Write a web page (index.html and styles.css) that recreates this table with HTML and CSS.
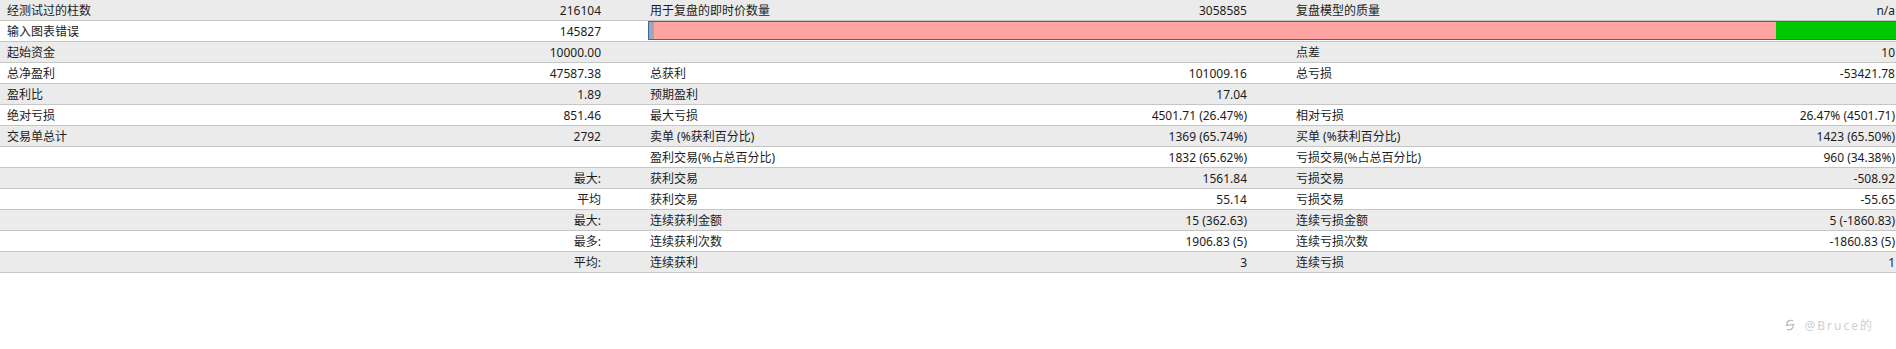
FILE: index.html
```html
<!DOCTYPE html>
<html lang="zh-CN">
<head>
<meta charset="utf-8">
<title>测试报告</title>
<link rel="stylesheet" href="styles.css">
</head>
<body>
<div class="report">
  <div class="row gray">
    <div class="grp"><span class="l">经测试过的柱数</span><span class="v">216104</span></div>
    <div class="grp"><span class="l">用于复盘的即时价数量</span><span class="v">3058585</span></div>
    <div class="grp last"><span class="l">复盘模型的质量</span><span class="v">n/a</span></div>
  </div>
  <div class="row">
    <div class="grp"><span class="l">输入图表错误</span><span class="v">145827</span></div>
    <div class="bar">
      <div class="bar-start"></div>
      <div class="bar-pink"></div>
      <div class="bar-green"></div>
    </div>
  </div>
  <div class="row gray">
    <div class="grp"><span class="l">起始资金</span><span class="v">10000.00</span></div>
    <div class="grp"><span class="l"></span><span class="v"></span></div>
    <div class="grp last"><span class="l">点差</span><span class="v">10</span></div>
  </div>
  <div class="row">
    <div class="grp"><span class="l">总净盈利</span><span class="v">47587.38</span></div>
    <div class="grp"><span class="l">总获利</span><span class="v">101009.16</span></div>
    <div class="grp last"><span class="l">总亏损</span><span class="v">-53421.78</span></div>
  </div>
  <div class="row gray">
    <div class="grp"><span class="l">盈利比</span><span class="v">1.89</span></div>
    <div class="grp"><span class="l">预期盈利</span><span class="v">17.04</span></div>
    <div class="grp last"><span class="l"></span><span class="v"></span></div>
  </div>
  <div class="row">
    <div class="grp"><span class="l">绝对亏损</span><span class="v">851.46</span></div>
    <div class="grp"><span class="l">最大亏损</span><span class="v">4501.71 (26.47%)</span></div>
    <div class="grp last"><span class="l">相对亏损</span><span class="v">26.47% (4501.71)</span></div>
  </div>
  <div class="row gray">
    <div class="grp"><span class="l">交易单总计</span><span class="v">2792</span></div>
    <div class="grp"><span class="l">卖单 (%获利百分比)</span><span class="v">1369 (65.74%)</span></div>
    <div class="grp last"><span class="l">买单 (%获利百分比)</span><span class="v">1423 (65.50%)</span></div>
  </div>
  <div class="row">
    <div class="grp"><span class="l"></span><span class="v"></span></div>
    <div class="grp"><span class="l">盈利交易(%占总百分比)</span><span class="v">1832 (65.62%)</span></div>
    <div class="grp last"><span class="l">亏损交易(%占总百分比)</span><span class="v">960 (34.38%)</span></div>
  </div>
  <div class="row gray">
    <div class="grp"><span class="l"></span><span class="v">最大:</span></div>
    <div class="grp"><span class="l">获利交易</span><span class="v">1561.84</span></div>
    <div class="grp last"><span class="l">亏损交易</span><span class="v">-508.92</span></div>
  </div>
  <div class="row">
    <div class="grp"><span class="l"></span><span class="v">平均</span></div>
    <div class="grp"><span class="l">获利交易</span><span class="v">55.14</span></div>
    <div class="grp last"><span class="l">亏损交易</span><span class="v">-55.65</span></div>
  </div>
  <div class="row gray">
    <div class="grp"><span class="l"></span><span class="v">最大:</span></div>
    <div class="grp"><span class="l">连续获利金额</span><span class="v">15 (362.63)</span></div>
    <div class="grp last"><span class="l">连续亏损金额</span><span class="v">5 (-1860.83)</span></div>
  </div>
  <div class="row">
    <div class="grp"><span class="l"></span><span class="v">最多:</span></div>
    <div class="grp"><span class="l">连续获利次数</span><span class="v">1906.83 (5)</span></div>
    <div class="grp last"><span class="l">连续亏损次数</span><span class="v">-1860.83 (5)</span></div>
  </div>
  <div class="row gray">
    <div class="grp"><span class="l"></span><span class="v">平均:</span></div>
    <div class="grp"><span class="l">连续获利</span><span class="v">3</span></div>
    <div class="grp last"><span class="l">连续亏损</span><span class="v">1</span></div>
  </div>
</div>
<div class="watermark">
  <svg class="wm-icon" width="14" height="14" viewBox="0 0 14 14" aria-hidden="true">
    <path d="M9.5 2.5 C6 1.5 3 4 4 7 M4.5 11.5 C8 12.5 11 10 10 7 M3 7.5 L11 6.5" fill="none" stroke="#b0b0b0" stroke-width="1.2" stroke-linecap="round"/>
  </svg>
  <span class="wm-text">@Bruce的</span>
</div>
</body>
</html>
```
FILE: styles.css
```css
html, body {
  margin: 0;
  padding: 0;
  background: #ffffff;
}

body {
  width: 1896px;
  height: 349px;
  position: relative;
  overflow: hidden;
  font-family: "Noto Sans", "Noto Sans CJK SC", sans-serif;
  font-size: 12px;
  color: #1c1c1c;
}

.report {
  display: flex;
  flex-direction: column;
}

.row {
  display: grid;
  grid-template-columns: 605px 608px 607px;
  column-gap: 38px;
  height: 20px;
  border-bottom: 1px solid #c6c6c6;
  background: #ffffff;
}

.row.gray {
  background: #ebebeb;
}

.grp {
  display: flex;
  justify-content: space-between;
  align-items: center;
  line-height: 20px;
  padding: 1px 4px 0 7px;
  height: 20px;
  box-sizing: border-box;
  white-space: nowrap;
}

.grp.last {
  padding-right: 1px;
}

.bar {
  grid-column: 2 / 4;
  margin-left: 5px;
  height: 19px;
  box-sizing: border-box;
  border-top: 1px solid #4a5ea8;
  border-bottom: 1px solid #4a5ea8;
  border-left: 1px solid #4a5ea8;
  display: flex;
}

.bar-start {
  width: 5px;
  background: #9aa9b6;
}

.bar-pink {
  flex: 1;
  background: #ffa3a3;
}

.bar-green {
  width: 120px;
  background: #00c800;
}

.watermark {
  position: absolute;
  right: 22px;
  top: 316px;
  display: flex;
  align-items: center;
  gap: 8px;
  color: #cfcfcf;
  font-size: 12px;
}

.wm-text {
  letter-spacing: 2px;
}

.wm-icon {
  display: block;
}
```
